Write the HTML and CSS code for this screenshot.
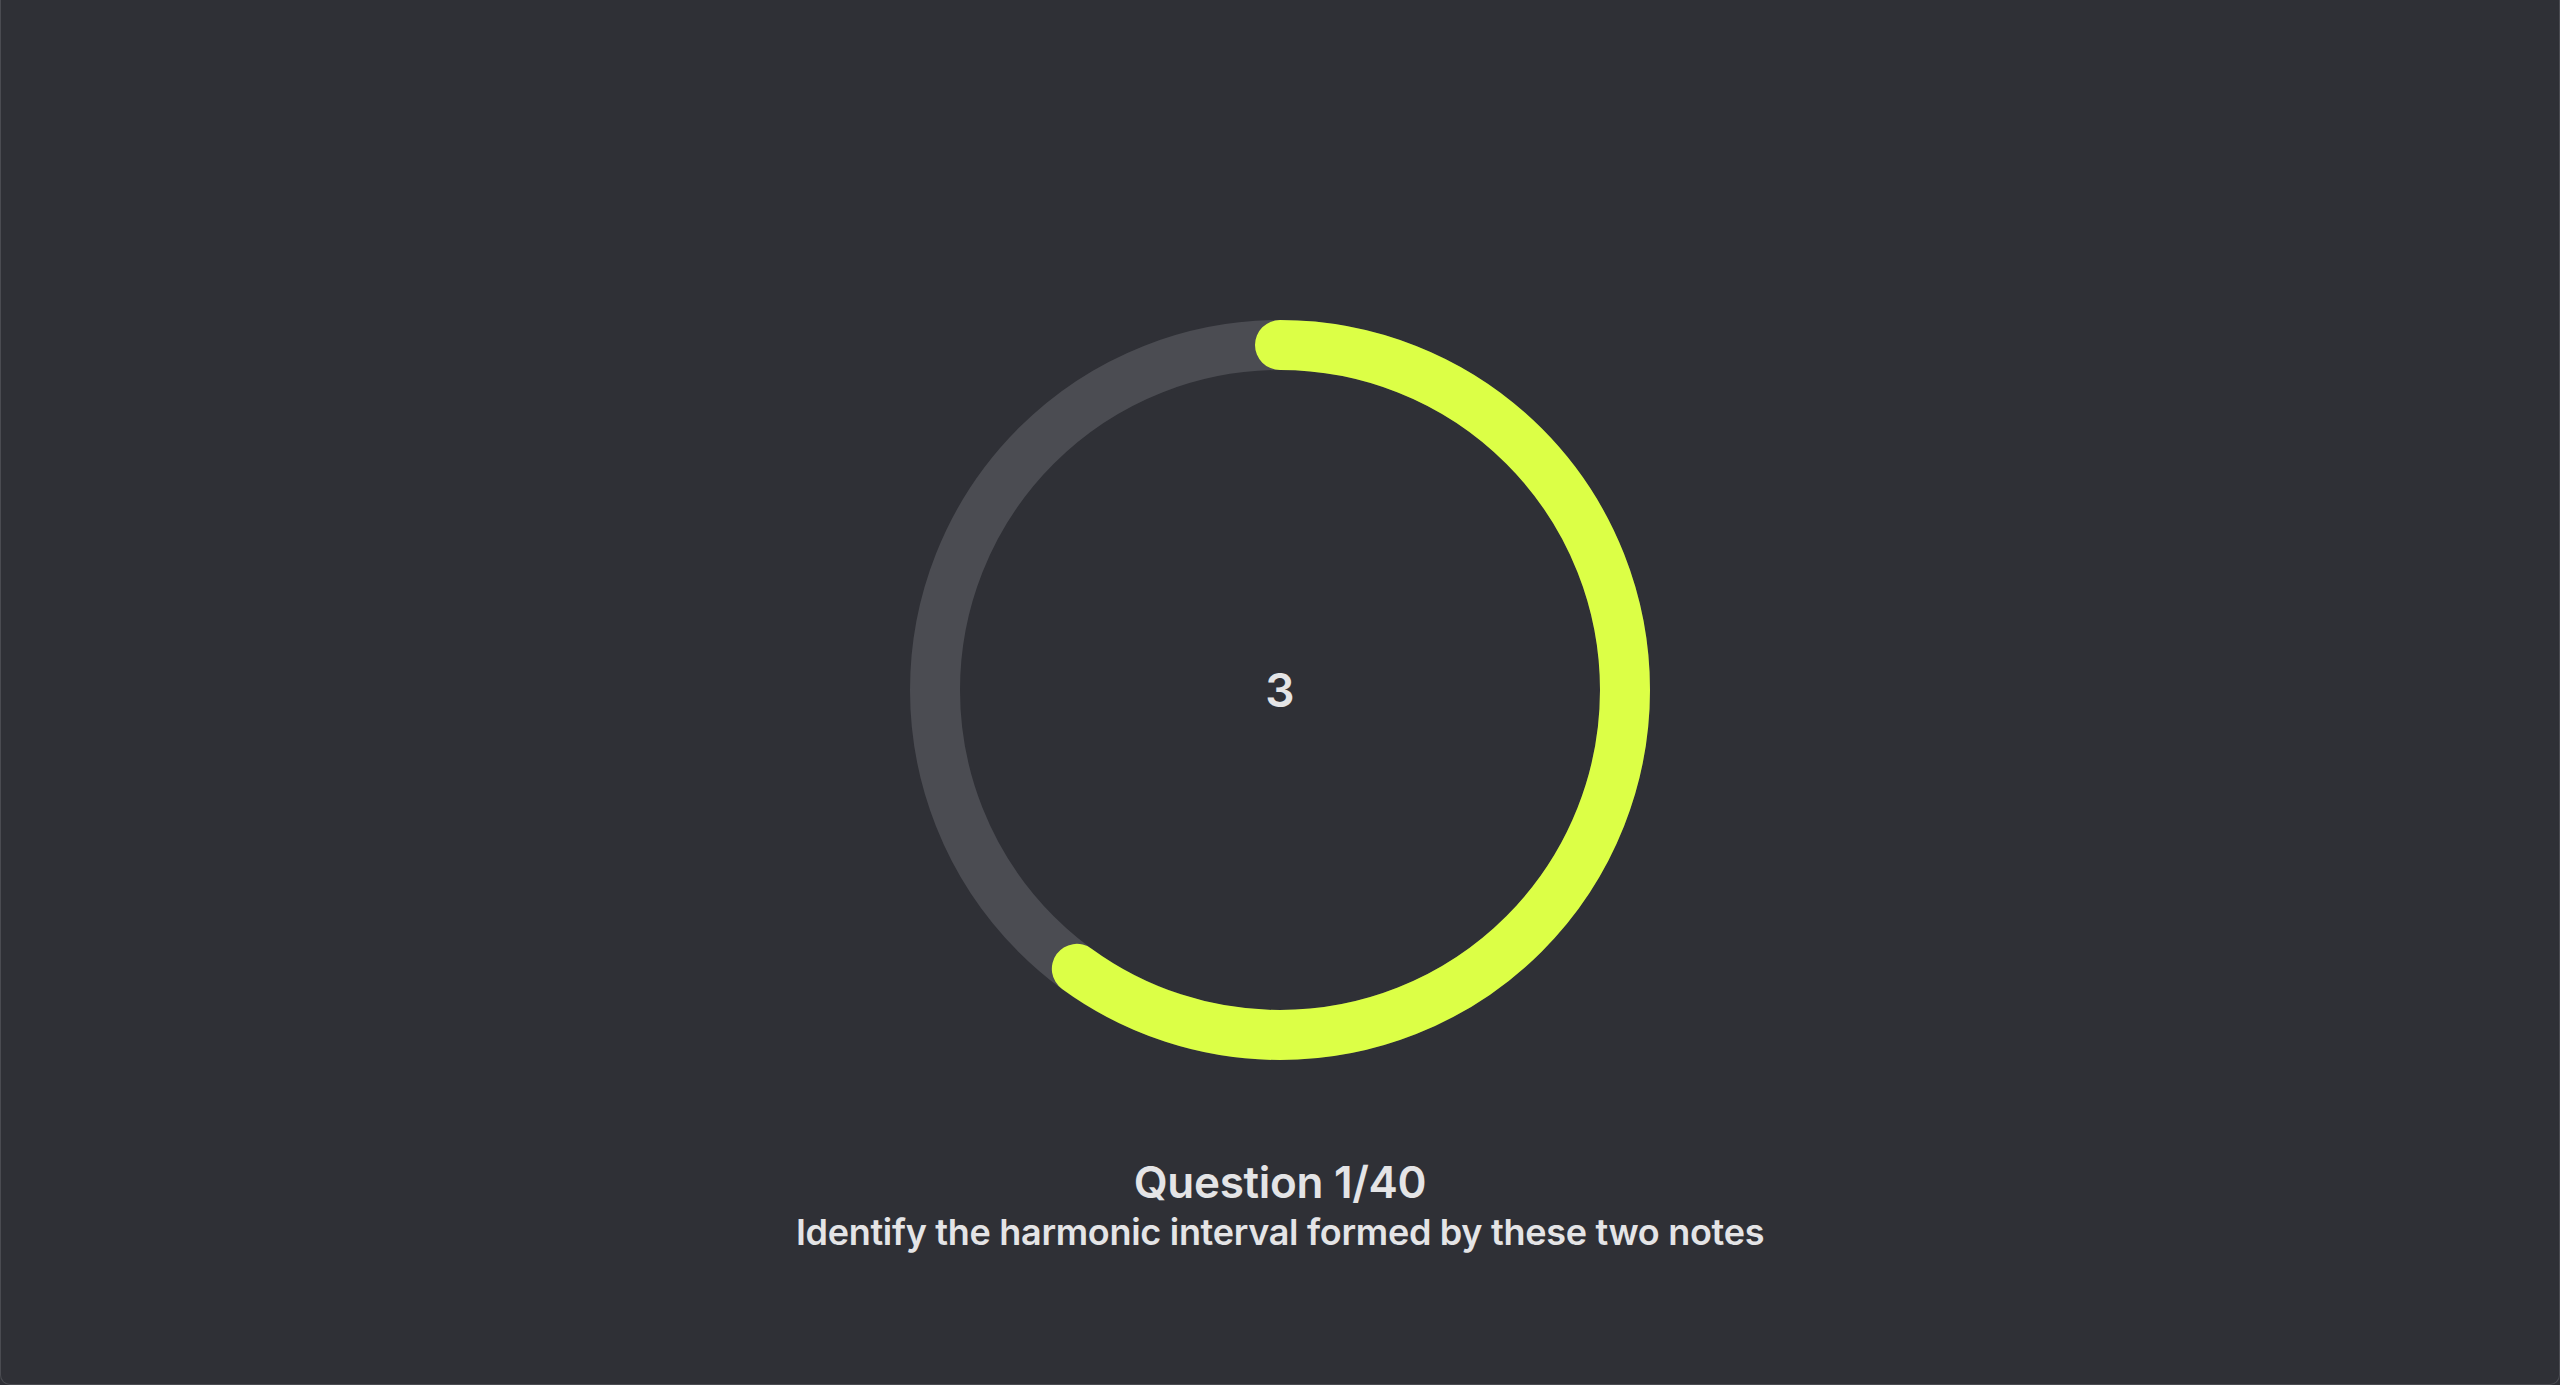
FILE: index.html
```html
<!DOCTYPE html>
<html lang="en">

<head>
    <meta charset="UTF-8">
    <meta name="viewport" content="width=device-width, initial-scale=1.0">
    <title>Interval Quiz</title>
    <link rel="stylesheet" href="styles.css">
</head>

<body>
    <div id="quizFrame">
        <div id="countdown">
            <svg id="countdownRing" width="740" height="740" viewBox="0 0 740 740">
                <circle class="ringTrack" cx="370" cy="370" r="345"></circle>
                <circle class="ringProgress" cx="370" cy="370" r="345"
                    stroke-dasharray="1300.6 2167.7" transform="rotate(-90 370 370)"></circle>
            </svg>
            <div id="countdownNumber">3</div>
        </div>
        <div id="questionTitle">Question 1/40</div>
        <div id="questionText">Identify the harmonic interval formed by these two notes</div>
    </div>
</body>

</html>
```

FILE: styles.css
```css
body {
    background-color: #2f3036;
    margin: 0;
    height: 100vh;
    font-family: Inter, "Noto Sans", sans-serif;
    color: #e4e4e6;
}

#quizFrame {
    box-sizing: border-box;
    height: 100vh;
    display: flex;
    flex-direction: column;
    align-items: center;
    padding-top: 320px;
    border: 1px solid #4a4b51;
    border-top: none;
    border-radius: 0 0 10px 10px;
}

#countdown {
    display: grid;
    place-items: center;
}

#countdownRing,
#countdownNumber {
    grid-area: 1 / 1;
}

.ringTrack,
.ringProgress {
    fill: none;
    stroke-width: 50;
}

.ringTrack {
    stroke: #4b4c52;
}

.ringProgress {
    stroke: #dcff46;
    stroke-linecap: round;
}

#countdownNumber {
    font-size: 46px;
    font-weight: 600;
    line-height: 1;
}

#questionTitle {
    margin-top: 98px;
    font-size: 44px;
    font-weight: 600;
    line-height: 48px;
    letter-spacing: -0.3px;
}

#questionText {
    margin-top: 6px;
    font-size: 36px;
    font-weight: 600;
    line-height: 40px;
    letter-spacing: -0.3px;
}
```
